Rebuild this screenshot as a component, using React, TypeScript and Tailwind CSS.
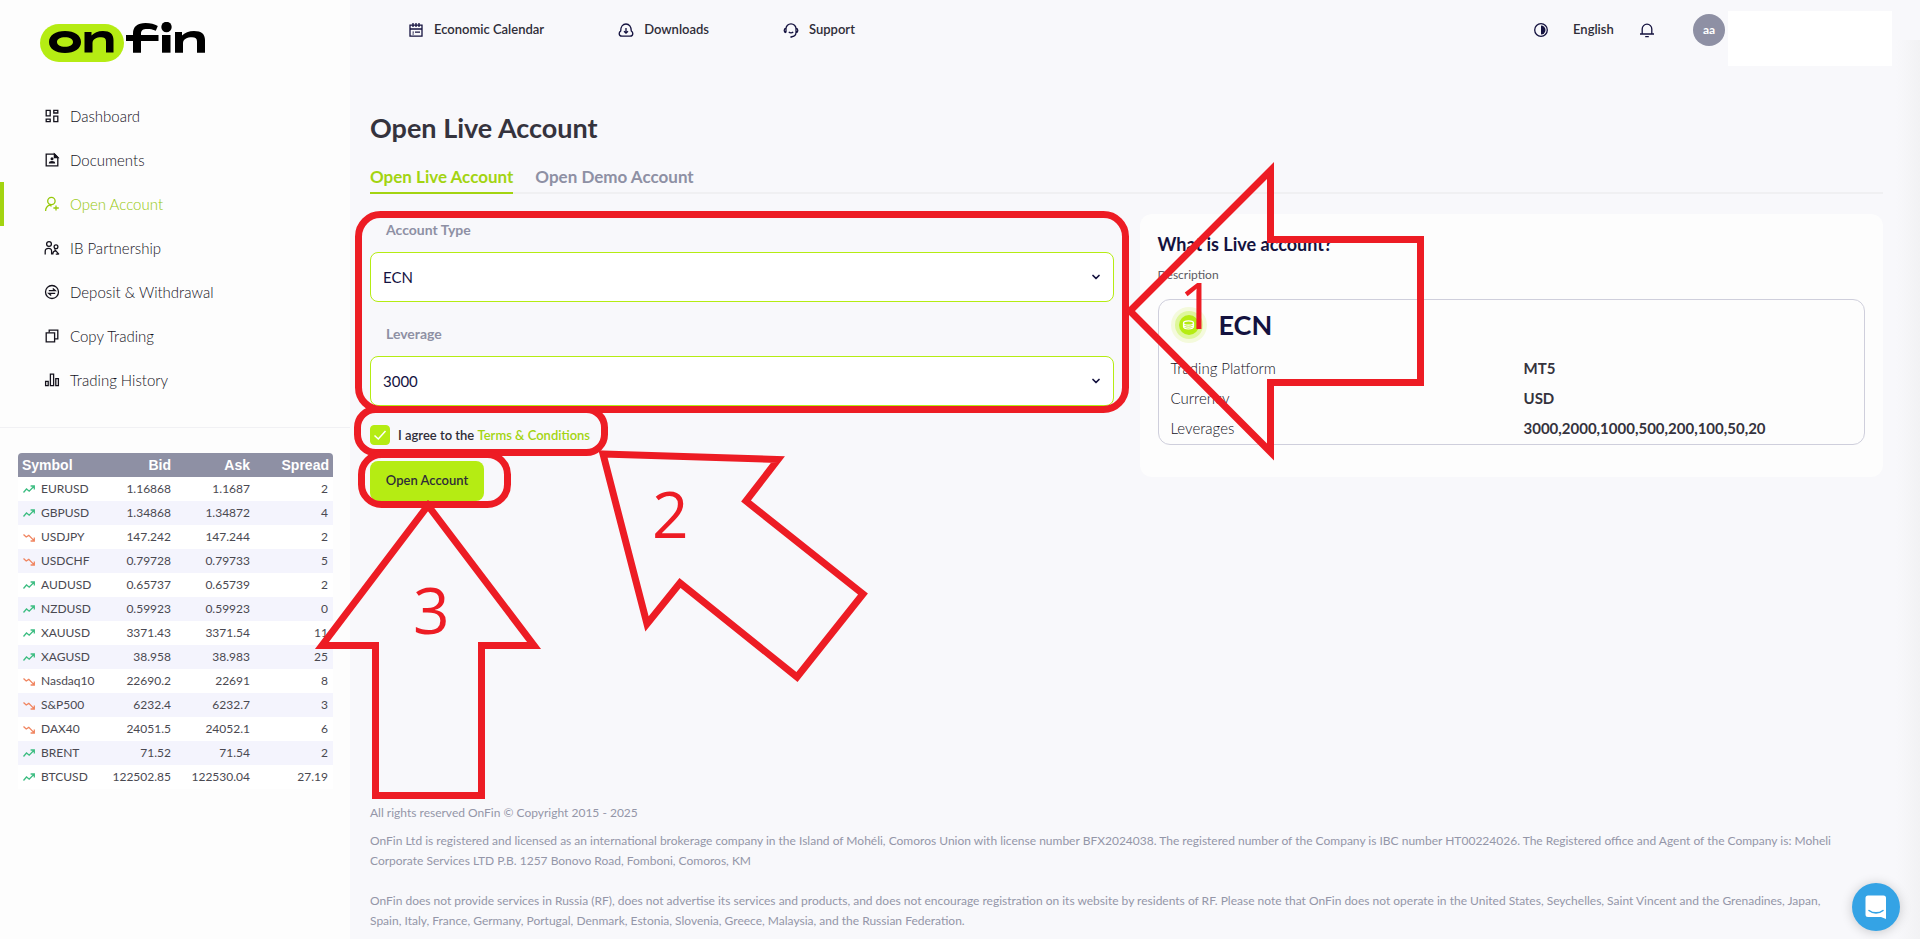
import { useState } from "react"
import type { ReactNode } from "react"
import { ChevronDown } from "lucide-react"
import clsx from "clsx"

function Icon({ children, className }: { children: ReactNode; className?: string }) {
  return (
    <svg
      viewBox="0 0 16 16"
      fill="none"
      stroke="currentColor"
      strokeWidth="1.3"
      aria-hidden="true"
      className={clsx("h-4 w-4 shrink-0", className)}
    >
      {children}
    </svg>
  )
}

const navItems = [
  {
    label: "Dashboard",
    icon: <path d="M2.2 2.4h4v5.4h-4zM9.8 2.4h4v2.6h-4zM2.2 11.2h4v2.4h-4zM9.8 8.2h4v5.4h-4z" />,
  },
  {
    label: "Documents",
    icon: (
      <>
        <path d="M2.2 2.2h8.4l3.2 3.2v8.4H2.2z" />
        <path d="M10.4 2v3.6H14z" fill="currentColor" />
        <circle cx="8" cy="6.8" r="1.5" fill="currentColor" stroke="none" />
        <path d="M4.8 11.6c0-2 1.2-2.7 3.2-2.7s3.2.7 3.2 2.7z" fill="currentColor" stroke="none" />
      </>
    ),
  },
  {
    label: "Open Account",
    active: true,
    icon: (
      <>
        <circle cx="7.4" cy="5" r="3.7" />
        <path d="M1.6 15c0-3 1.4-5 4-6.2M7.6 10.2c-.9-.4-1.8-.9-2.2-1.6M12 9.4v5.2M9.4 12h5.4" />
      </>
    ),
  },
  {
    label: "IB Partnership",
    icon: (
      <>
        <circle cx="5" cy="4" r="2.4" />
        <circle cx="12" cy="6.8" r="1.9" />
        <path d="M1.2 14.4v-3c0-2 1.4-3 3.4-3s3 1 3 3v3M8.8 14.4c0-2.4 1-3.6 3-3.6M10.6 9.4l4.4 5M11.8 14.2h2.8" />
      </>
    ),
  },
  {
    label: "Deposit & Withdrawal",
    icon: (
      <>
        <circle cx="8" cy="8" r="6.5" />
        <path d="M4.8 6.7h6.4L8.8 4.6M11.2 9.3H4.8l2.4 2.1" />
      </>
    ),
  },
  {
    label: "Copy Trading",
    icon: (
      <>
        <path d="M2.2 4.8h8.4v9H2.2z" />
        <path d="M5.2 4.6V2.2h8.6v8.6h-3" />
      </>
    ),
  },
  {
    label: "Trading History",
    icon: <path d="M1.6 9.4h2.6v4.2H1.6zM6.4 2.2h3.2v11.4H6.4zM11.8 6.6h2.6v7h-2.6z" />,
  },
]

const quotes = [
  { symbol: "EURUSD", bid: "1.16868", ask: "1.1687", spread: "2", up: true },
  { symbol: "GBPUSD", bid: "1.34868", ask: "1.34872", spread: "4", up: true },
  { symbol: "USDJPY", bid: "147.242", ask: "147.244", spread: "2", up: false },
  { symbol: "USDCHF", bid: "0.79728", ask: "0.79733", spread: "5", up: false },
  { symbol: "AUDUSD", bid: "0.65737", ask: "0.65739", spread: "2", up: true },
  { symbol: "NZDUSD", bid: "0.59923", ask: "0.59923", spread: "0", up: true },
  { symbol: "XAUUSD", bid: "3371.43", ask: "3371.54", spread: "11", up: true },
  { symbol: "XAGUSD", bid: "38.958", ask: "38.983", spread: "25", up: true },
  { symbol: "Nasdaq10", bid: "22690.2", ask: "22691", spread: "8", up: false },
  { symbol: "S&P500", bid: "6232.4", ask: "6232.7", spread: "3", up: false },
  { symbol: "DAX40", bid: "24051.5", ask: "24052.1", spread: "6", up: false },
  { symbol: "BRENT", bid: "71.52", ask: "71.54", spread: "2", up: true },
  { symbol: "BTCUSD", bid: "122502.85", ask: "122530.04", spread: "27.19", up: true },
]

const details = [
  { label: "Trading Platform", value: "MT5" },
  { label: "Currency", value: "USD" },
  { label: "Leverages", value: "3000,2000,1000,500,200,100,50,20" },
]

function Logo() {
  return (
    <svg viewBox="0 0 168 40" role="img" aria-label="onfin" className="h-10 w-[168px]">
      <rect x="0" y="2" width="84" height="38" rx="19" fill="#b5ec13" />
      <path
        fillRule="evenodd"
        d="M25 9c9.500 0 16 4.300 16 11s-6.500 11-16 11S9 26.700 9 20 15.500 9 25 9zm0 6.200c-4.800 0-8 1.700-8 4.700s3.200 4.800 8 4.800 8-1.800 8-4.800-3.200-4.700-8-4.700z"
      />
      <path d="M44.500 10h7v3.600C54 10.800 58 9 63 9c7 0 10.500 3.200 10.500 9v12.600H66V19.500c0-3-1.600-4.200-4.800-4.200-4.600 0-8.700 1.900-8.700 6v9.300h-8z" />
      <path d="M93 30.700V19h-7v-6h7v-1.500C93 4.500 97.500 1 105.500 1c5 0 9 1 12.300 3l-2 4.800C112.800 7.300 110 7 107 7c-4 0-6 1.200-6 4.500V13h17.500v6H101v11.700z" />
      <rect x="122" y="13" width="8.500" height="17.700" />
      <circle cx="126.500" cy="5" r="5.200" />
      <path d="M135 10h7v3.600C144.500 10.800 149 9 154 9c7.500 0 11 3.200 11 9v12.700h-8V19.500c0-3-1.600-4.200-5-4.200-4.800 0-9 1.900-9 6v9.400h-8z" />
    </svg>
  )
}

function TrendIcon({ up }: { up: boolean }) {
  return (
    <svg
      viewBox="0 0 12 9"
      fill="none"
      stroke="currentColor"
      strokeWidth="1.3"
      aria-hidden="true"
      className={clsx("h-[9px] w-3 shrink-0", up ? "text-[#3dbd82]" : "text-[#f0845f]")}
    >
      {up ? (
        <path d="M.5 7.500L3.500 4l2.700 2.200L11 1.300M7.600 1H11.300V4.600" />
      ) : (
        <path d="M.5 1.500L3.200 4l2.600-1.600L11 7.600M7.600 8H11.300V4.400" />
      )}
    </svg>
  )
}

function Sidebar() {
  return (
    <aside className="w-[350px] shrink-0 bg-[#fdfdfd]">
      <a href="#" className="ml-10 mt-[22px] block w-[168px]">
        <Logo />
      </a>
      <nav className="mt-8 border-b border-[#f1f1f4] pb-[25px]">
        {navItems.map((item) => (
          <a
            key={item.label}
            href="#"
            className={clsx(
              "flex h-11 items-center gap-[10px] border-l-4 pl-10 text-[15px] font-light",
              item.active ? "border-[#a3d411] text-[#96c80a]" : "border-transparent text-[#14121c]",
            )}
          >
            <Icon>{item.icon}</Icon>
            {item.label}
          </a>
        ))}
      </nav>
      <div className="ml-[18px] mr-[17px] mt-[25px] overflow-hidden rounded-t">
        <table className="w-full table-fixed text-xs text-[#4a4951]">
          <thead>
            <tr className="h-6 bg-[#8e90a4] font-['Liberation_Sans',sans-serif] text-sm text-white">
              <th className="w-[78px] pl-1 text-left font-bold">Symbol</th>
              <th className="w-[79px] pr-1 text-right font-bold">Bid</th>
              <th className="w-[79px] pr-1 text-right font-bold">Ask</th>
              <th className="pr-1 text-right font-bold">Spread</th>
            </tr>
          </thead>
          <tbody>
            {quotes.map((q) => (
              <tr key={q.symbol} className="h-6 bg-white even:bg-[#f4f4fd]">
                <td className="pl-[5px]">
                  <div className="flex items-center gap-[6px]">
                    <TrendIcon up={q.up} />
                    {q.symbol}
                  </div>
                </td>
                <td className="pr-1 text-right">{q.bid}</td>
                <td className="pr-1 text-right">{q.ask}</td>
                <td className="pr-[5px] text-right">{q.spread}</td>
              </tr>
            ))}
          </tbody>
        </table>
      </div>
    </aside>
  )
}

function TopBar() {
  return (
    <header className="flex h-[66px] items-start pl-[58px] pr-7 text-[13px] font-semibold text-[#2f2d38]">
      <nav className="flex h-[60px] items-center gap-[74px]">
        <a href="#" className="flex items-center gap-[10px]">
          <Icon className="text-[#14123f]">
            <path d="M2 3.200h12v11H2zM2 7h12M5 1v4M8 1v4M11 1v4M4.600 10.200h1.200M7 10.200h5M4.600 12h1" />
          </Icon>
          Economic Calendar
        </a>
        <a href="#" className="flex items-center gap-[10px]">
          <Icon className="text-[#14123f]">
            <path d="M3.900 14.200h8.200c1.600 0 2.700-1.200 2.700-2.700 0-1-.6-1.900-1.500-2.500C13.300 4.900 11.200 2 8 2S2.700 4.900 2.700 9c-.9.600-1.500 1.500-1.500 2.500 0 1.500 1.100 2.700 2.700 2.700z" />
            <path d="M8 6v5M6 9.200l2 2 2-2" />
          </Icon>
          Downloads
        </a>
        <a href="#" className="flex items-center gap-[10px]">
          <Icon className="text-[#14123f]">
            <path d="M3 10.500V6.800a5 5 0 0 1 10 0v3.700c0 2.400-1.600 4-4.600 4.200M3 6.200c-1.200.2-1.800 1-1.800 2.200S1.800 10.400 3 10.600M13 6.200c1.200.2 1.800 1 1.800 2.200s-.6 2-1.800 2.200M5.800 9.800c1 1.300 3.400 1.300 4.400 0M7.400 15h2" />
          </Icon>
          Support
        </a>
      </nav>
      <div className="ml-auto flex h-[60px] items-center">
        <button type="button" aria-label="Toggle theme" className="text-[#14123f]">
          <Icon>
            <circle cx="8" cy="8" r="6.300" />
            <path d="M8 3.500a4.500 4.500 0 0 1 0 9z" fill="currentColor" stroke="none" />
          </Icon>
        </button>
        <button type="button" className="ml-6 w-[42px] text-left">
          English
        </button>
        <button type="button" aria-label="Notifications" className="ml-6 text-[#14123f]">
          <Icon>
            <path d="M1 12h14M3.200 12V7a4.800 4.800 0 0 1 9.600 0v5M6.200 14.600h3.600" />
          </Icon>
        </button>
        <span className="ml-[38px] flex h-8 w-8 items-center justify-center rounded-full bg-[#8e90a4] text-xs font-bold text-white">
          aa
        </span>
      </div>
      <div className="ml-[3px] mt-[11px] h-[55px] w-[164px] bg-white" />
    </header>
  )
}

function SelectField({ id, label, options }: { id: string; label: string; options: string[] }) {
  return (
    <div>
      <label htmlFor={id} className="block pl-4 text-sm font-bold leading-5 text-[#8e90a4]">
        {label}
      </label>
      <div className="relative mt-3">
        <select
          id={id}
          className="block h-[50px] w-full appearance-none rounded-lg border border-[#b5ec13] bg-white px-3 text-[15px] text-[#14123f]"
        >
          {options.map((option) => (
            <option key={option}>{option}</option>
          ))}
        </select>
        <ChevronDown
          className="pointer-events-none absolute right-3 top-[19px] h-3 w-3 text-[#14123f]"
          strokeWidth={3.5}
        />
      </div>
    </div>
  )
}

function AccountForm() {
  const [agreed, setAgreed] = useState(true)

  return (
    <form className="pt-[6px]" onSubmit={(e) => e.preventDefault()}>
      <div className="space-y-[22px]">
        <SelectField id="account-type" label="Account Type" options={["ECN"]} />
        <SelectField
          id="leverage"
          label="Leverage"
          options={["3000", "2000", "1000", "500", "200", "100", "50", "20"]}
        />
      </div>
      <div className="mt-[19px] flex items-center text-[13px] font-semibold leading-5 text-[#2f2d38]">
        <span className="relative mr-2 h-5 w-5">
          <input
            id="agree"
            type="checkbox"
            checked={agreed}
            onChange={(e) => setAgreed(e.target.checked)}
            className="block h-5 w-5 appearance-none rounded border border-[#b5ec13] bg-white checked:bg-[#b5ec13]"
          />
          {agreed && (
            <svg
              viewBox="0 0 20 20"
              fill="none"
              stroke="white"
              strokeWidth="1.500"
              className="pointer-events-none absolute inset-0"
            >
              <path d="M4.500 10.500l3.800 3.500L15.500 6" />
            </svg>
          )}
        </span>
        <label htmlFor="agree">I agree to the&nbsp;</label>
        <a href="#" className="text-[#a3d411]">
          Terms &amp; Conditions
        </a>
      </div>
      <button
        type="submit"
        className="mt-4 h-10 w-[114px] rounded-lg bg-[#b5ec13] text-[13px] font-semibold text-[#2f2d38]"
      >
        Open Account
      </button>
    </form>
  )
}

function AccountInfo() {
  return (
    <section className="rounded-xl bg-[#fdfdfd] px-[18px] pb-8 pt-[18px]">
      <h2 className="text-lg font-bold leading-6 text-[#14123f]">What is Live account?</h2>
      <p className="mt-[9px] text-xs leading-5 text-[#5b5a64]">Description</p>
      <div className="mt-[14px] rounded-xl border border-[#cfcfdc] px-3 pb-px pt-[3px]">
        <div className="flex h-11 items-center gap-3">
          <svg viewBox="0 0 36 36" aria-hidden="true" className="h-9 w-9">
            <circle cx="18" cy="18" r="18" fill="#f4fadc" />
            <circle cx="18" cy="18" r="14" fill="#def79a" />
            <circle cx="18" cy="18" r="10" fill="#b5ec13" />
            <g fill="none" stroke="white" strokeWidth="1.200">
              <ellipse cx="17.500" cy="16" rx="5" ry="2.200" />
              <path d="M12.500 16v3.600c0 1.300 2.200 2.400 5 2.400s5-1.100 5-2.400V16M12.500 17.800c0 1.300 2.200 2.400 5 2.400s5-1.100 5-2.400" />
            </g>
          </svg>
          <h3 className="text-[27px] font-bold leading-8 text-[#14123f]">ECN</h3>
        </div>
        <dl className="mt-[6px]">
          {details.map((row) => (
            <div key={row.label} className="flex h-[30px] items-center text-[15px]">
              <dt className="w-[353px] font-light text-[#14121c]">{row.label}</dt>
              <dd className="font-bold text-[#35333d]">{row.value}</dd>
            </div>
          ))}
        </dl>
      </div>
    </section>
  )
}

function Footer() {
  return (
    <footer className="mt-auto pl-5 pr-[72px] text-xs leading-5 text-[#9496a8]">
      <p>All rights reserved OnFin © Copyright 2015 - 2025</p>
      <p className="mt-2">
        OnFin Ltd is registered and licensed as an international brokerage company in the Island of Mohéli, Comoros
        Union with license number BFX2024038. The registered number of the Company is IBC number HT00224026. The
        Registered office and Agent of the Company is: Moheli Corporate Services LTD P.B. 1257 Bonovo Road, Fomboni,
        Comoros, KM
      </p>
      <p className="mt-5 pb-2">
        OnFin does not provide services in Russia (RF), does not advertise its services and products, and does not
        encourage registration on its website by residents of RF. Please note that OnFin does not operate in the United
        States, Seychelles, Saint Vincent and the Grenadines, Japan, Spain, Italy, France, Germany, Portugal, Denmark,
        Estonia, Slovenia, Greece, Malaysia, and the Russian Federation.
      </p>
    </footer>
  )
}

// Step markers drawn over the page: what to fill in, tick and press, in order
function StepMarkers() {
  return (
    <svg
      viewBox="0 0 1920 939"
      aria-hidden="true"
      className="pointer-events-none absolute left-0 top-0 w-full"
      fill="none"
      stroke="#ed1c24"
      strokeWidth="7"
    >
      <rect x="358.500" y="214.500" width="767" height="195" rx="22" />
      <rect x="357.500" y="409.500" width="247" height="43" rx="18" />
      <rect x="361.500" y="454.500" width="146" height="50" rx="20" />
      <path d="M1130 311L1270.500 170.500V239.500H1420.500V382.500H1270.500V452z" />
      <path d="M603 454L778 459.500L746 501L863 594L797 677L680 583L647 624z" />
      <path d="M428 505.500L534 645.500H481.500V795.500H375.500V645.500H322z" />
      <g fill="#ed1c24" stroke="none" className="font-['Open_Sans',sans-serif] text-[64px]">
        <text x="1179" y="329">1</text>
        <text x="652" y="538">2</text>
        <text x="413" y="634">3</text>
      </g>
    </svg>
  )
}

export default function App() {
  return (
    <div className="relative flex min-h-screen overflow-hidden bg-[#f8f8fb] font-['Lato',sans-serif]">
      <Sidebar />
      <div className="flex min-w-0 flex-1 flex-col">
        <TopBar />
        <main className="mt-11 pl-5 pr-[37px]">
          <h1 className="text-[27px] font-bold leading-9 text-[#35333d]">Open Live Account</h1>
          <div role="tablist" className="mt-[19px] flex gap-[22px] border-b-2 border-[#f0f0f2] text-[17px] font-bold leading-6">
            <button
              type="button"
              role="tab"
              aria-selected="true"
              className="-mb-[2px] border-b-2 border-[#a3d411] pb-[3px] text-[#a3d411]"
            >
              Open Live Account
            </button>
            <button type="button" role="tab" aria-selected="false" className="pb-[3px] text-[#8e90a4]">
              Open Demo Account
            </button>
          </div>
          <div className="mt-5 grid grid-cols-2 items-start gap-[26px]">
            <AccountForm />
            <AccountInfo />
          </div>
        </main>
        <Footer />
      </div>
      <div className="pointer-events-none absolute bottom-0 right-0 top-10 w-6 bg-linear-to-r from-transparent to-[#f2f2f4]" />
      <StepMarkers />
      <button
        type="button"
        aria-label="Open chat"
        className="fixed bottom-2 right-5 flex h-12 w-12 items-center justify-center rounded-full bg-[#34a3e5] shadow-[0_1px_12px_rgba(0,0,0,0.2)]"
      >
        <svg viewBox="0 0 24 24" className="h-6 w-6">
          <path d="M4 .500h15.500a2.500 2.500 0 0 1 2.500 2.500v21l-5-2H4A2.500 2.500 0 0 1 1.500 19.500V3A2.500 2.500 0 0 1 4 .500z" fill="white" />
          <path d="M5 15.500c4 3.200 10 3.200 14 0" fill="none" stroke="#34a3e5" strokeWidth="1.600" strokeLinecap="round" />
        </svg>
      </button>
    </div>
  )
}
